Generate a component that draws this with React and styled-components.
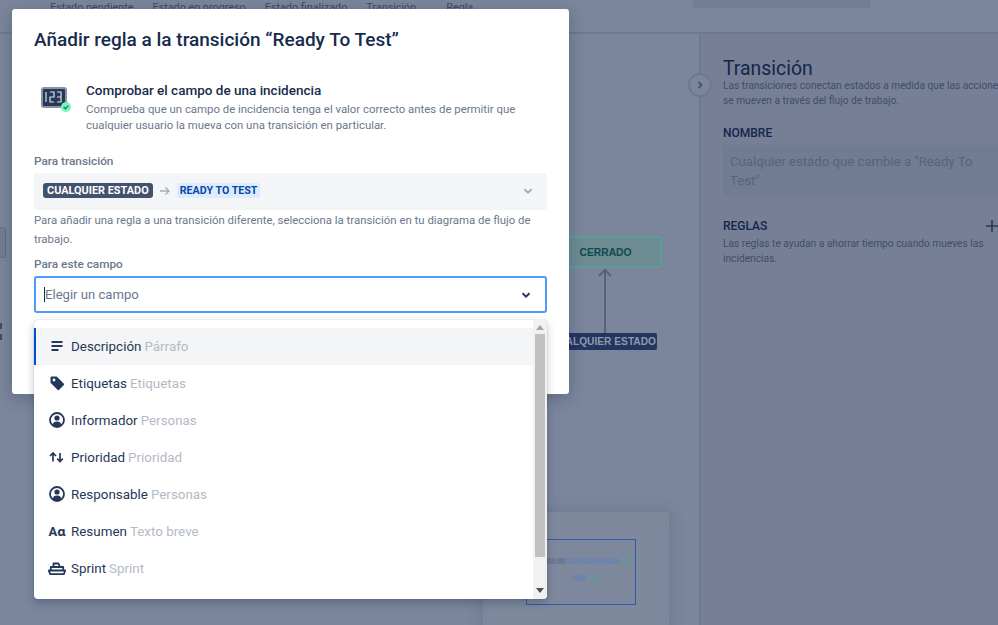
import styled, { createGlobalStyle } from 'styled-components'

const FIELDS = [
  { name: 'Descripción', type: 'Párrafo', icon: 'lines', active: true },
  { name: 'Etiquetas', type: 'Etiquetas', icon: 'tag' },
  { name: 'Informador', type: 'Personas', icon: 'person' },
  { name: 'Prioridad', type: 'Prioridad', icon: 'arrows' },
  { name: 'Responsable', type: 'Personas', icon: 'person' },
  { name: 'Resumen', type: 'Texto breve', icon: 'text' },
  { name: 'Sprint', type: 'Sprint', icon: 'boat' },
]

function FieldIcon({ icon }) {
  if (icon === 'text') return <TextGlyph>Aɑ</TextGlyph>
  return (
    <svg width="18" height="18" viewBox="0 0 18 18" fill="none">
      {icon === 'lines' && (
        <path d="M3.5 5h11M3.5 9h11M3.5 13h7" stroke="#253858" strokeWidth="2" />
      )}
      {icon === 'tag' && (
        <path
          d="M2.5 3.5a1 1 0 0 1 1-1h5.2l7 7a1.2 1.2 0 0 1 0 1.7l-4.5 4.5a1.2 1.2 0 0 1-1.7 0l-7-7zM6 7.4a1.4 1.4 0 1 0 0-2.8 1.4 1.4 0 0 0 0 2.8z"
          fill="#253858"
          fillRule="evenodd"
        />
      )}
      {icon === 'person' && (
        <>
          <circle cx="9" cy="9" r="7" stroke="#253858" strokeWidth="1.8" />
          <circle cx="9" cy="7" r="2.6" fill="#253858" />
          <path d="M4.6 14c.4-2.6 2-3.6 4.4-3.6s4 1 4.4 3.6a7 7 0 0 1-8.8 0z" fill="#253858" />
        </>
      )}
      {icon === 'arrows' && (
        <path
          d="M5 13.5V5.5M2 8l3-3 3 3M12 5v8.5M9.2 10.7l2.8 2.8 2.8-2.8"
          stroke="#253858"
          strokeWidth="1.7"
        />
      )}
      {icon === 'boat' && (
        <path
          d="M0.8 11.5h16.4l-1.4 3.7H2.2zM2.8 11.5V8h12.4v3.5M5.5 8V4.5h5L12 8"
          stroke="#253858"
          strokeWidth="1.8"
          strokeLinejoin="round"
        />
      )}
    </svg>
  )
}

function Chevron({ color }) {
  return (
    <svg width="12" height="12" viewBox="0 0 12 12" fill="none">
      <path d="M2.5 4.2L6 7.6l3.5-3.4" stroke={color} strokeWidth="2" />
    </svg>
  )
}

export default function App() {
  return (
    <>
      <GlobalStyle />
      <Page>
        <Backdrop>
          <TopBar>
            <Legend>
              <span>Estado pendiente</span>
              <span>Estado en progreso</span>
              <span>Estado finalizado</span>
              <span>Transición</span>
              <LegendLast>Regla</LegendLast>
            </Legend>
            <SearchStub />
          </TopBar>
          <Body>
            <Canvas>
              <LeftTab />
              <LeftMarks />
              <ClosedNode>CERRADO</ClosedNode>
              <FlowArrow width="14" height="66" viewBox="0 0 14 66" fill="none">
                <path d="M7 66V2M1 8l6-6 6 6" stroke="#55627f" strokeWidth="2" />
              </FlowArrow>
              <AnyNode>CUALQUIER ESTADO</AnyNode>
              <Minimap>
                <MinimapFrame>
                  <MiniRow>
                    <MiniBlock $w={10} $c="#6f7890" />
                    <MiniBlock $w={9} $c="#6f7890" />
                    <MiniBlock $w={12} $c="#7084ab" />
                    <MiniBlock $w={13} $c="#7084ab" />
                    <MiniBlock $w={13} $c="#7084ab" />
                    <MiniBlock $w={12} $c="#7084ab" />
                    <MiniBlock $w={13} $c="#6f909a" />
                  </MiniRow>
                  <MiniRowLower>
                    <MiniBlock $w={13} $c="#7084ab" />
                    <MiniBlock $w={13} $c="#6f909a" />
                  </MiniRowLower>
                </MinimapFrame>
              </Minimap>
            </Canvas>
            <SidePanel>
              <PanelTitle>Transición</PanelTitle>
              <PanelText>
                Las transiciones conectan estados a medida que las acciones se mueven a través del flujo de trabajo.
              </PanelText>
              <PanelLabel>NOMBRE</PanelLabel>
              <NameBox>Cualquier estado que cambie a "Ready To Test"</NameBox>
              <RulesHead>
                <PanelLabel>REGLAS</PanelLabel>
                <Plus width="14" height="14" viewBox="0 0 14 14" fill="none">
                  <path d="M7 1v12M1 7h12" stroke="#2b3a5c" strokeWidth="1.6" />
                </Plus>
              </RulesHead>
              <PanelText>Las reglas te ayudan a ahorrar tiempo cuando mueves las incidencias.</PanelText>
            </SidePanel>
          </Body>
          <CollapseButton>
            <svg width="10" height="10" viewBox="0 0 10 10" fill="none">
              <path d="M3.5 2l3 3-3 3" stroke="#44526f" strokeWidth="1.8" />
            </svg>
          </CollapseButton>
        </Backdrop>

        <Modal>
          <Title>Añadir regla a la transición “Ready To Test”</Title>
          <RuleInfo>
            <RuleIcon width="34" height="30" viewBox="0 0 34 30" fill="none">
              <rect x="1" y="3" width="24" height="19" rx="2" fill="#253858" stroke="#8993a4" strokeWidth="2" />
              <path
                d="M5 7v10M9 7h4v5H9v5h4M16 7h4v10h-4M16 12h4"
                stroke="#dfe1e6"
                strokeWidth="1.2"
              />
              <circle cx="25" cy="22" r="5" fill="#79f2c0" />
              <path d="M22.6 22l1.8 1.8 3-3.2" stroke="#00875a" strokeWidth="1.3" />
            </RuleIcon>
            <div>
              <RuleTitle>Comprobar el campo de una incidencia</RuleTitle>
              <RuleText>
                Comprueba que un campo de incidencia tenga el valor correcto antes de permitir que cualquier usuario la
                mueva con una transición en particular.
              </RuleText>
            </div>
          </RuleInfo>

          <FieldLabel>Para transición</FieldLabel>
          <TransitionSelect>
            <Lozenge>CUALQUIER ESTADO</Lozenge>
            <svg width="12" height="12" viewBox="0 0 12 12" fill="none">
              <path d="M1 6h9M6.5 2.5L10 6l-3.5 3.5" stroke="#a5adba" strokeWidth="1.3" />
            </svg>
            <BlueLozenge>READY TO TEST</BlueLozenge>
            <SelectChevron>
              <Chevron color="#a5adba" />
            </SelectChevron>
          </TransitionSelect>
          <Help>
            Para añadir una regla a una transición diferente, selecciona la transición en tu diagrama de flujo de
            trabajo.
          </Help>

          <FieldLabelLower>Para este campo</FieldLabelLower>
          <FieldInput>
            <Caret />
            <Placeholder>Elegir un campo</Placeholder>
            <SelectChevron>
              <Chevron color="#253858" />
            </SelectChevron>
          </FieldInput>
        </Modal>

        <Dropdown>
          <OptionList>
            {FIELDS.map(field => (
              <Option key={field.name} $active={field.active}>
                <IconSlot>
                  <FieldIcon icon={field.icon} />
                </IconSlot>
                <OptionName>{field.name}</OptionName>
                <OptionType>{field.type}</OptionType>
              </Option>
            ))}
          </OptionList>
          <ScrollTrack>
            <ScrollArrow $up />
            <ScrollThumb />
            <ScrollArrow />
          </ScrollTrack>
        </Dropdown>
      </Page>
    </>
  )
}

const GlobalStyle = createGlobalStyle`
  html, body {
    margin: 0;
    height: 100%;
    overflow: hidden;
  }
  * {
    box-sizing: border-box;
  }
  body {
    font-family: Roboto, "Noto Sans", sans-serif;
    color: #172b4d;
  }
`
const Page = styled.div`
  position: relative;
  width: 998px;
  height: 625px;
  overflow: hidden;
  background: #7b859b;
`
const Backdrop = styled.div`
  position: relative;
  display: flex;
  flex-direction: column;
  height: 100%;
  color: #14264a;
`
const TopBar = styled.div`
  display: flex;
  justify-content: space-between;
  height: 34px;
  flex: none;
  padding-left: 50px;
  border-bottom: 2px solid #6e788f;
`
const Legend = styled.div`
  display: flex;
  gap: 19px;
  font-size: 10.8px;
  line-height: 14px;
  margin-top: 1px;
  color: #3c4966;
`
const LegendLast = styled.span`
  margin-left: 11px;
`
const SearchStub = styled.div`
  width: 177px;
  height: 8px;
  margin-right: 128px;
  background: #727d98;
`
const Body = styled.div`
  display: flex;
  flex: 1;
  min-height: 0;
`
const Canvas = styled.div`
  position: relative;
  flex: 1;
`
const LeftTab = styled.div`
  position: absolute;
  left: -10px;
  top: 193px;
  width: 16px;
  height: 31px;
  background: #727c92;
  border: 1px solid #636e88;
  border-radius: 3px;
`
const LeftMarks = styled.div`
  position: absolute;
  left: 0;
  top: 289px;
  width: 2px;
  height: 17px;
  border-top: 6px solid #3d4a68;
  border-bottom: 6px solid #3d4a68;
`
const ClosedNode = styled.div`
  position: absolute;
  left: 549px;
  top: 202px;
  width: 113px;
  height: 32px;
  display: flex;
  align-items: center;
  justify-content: center;
  background: #6d8b93;
  border: 2px solid #5e9d98;
  border-radius: 4px;
  font: bold 10.3px "Liberation Sans", sans-serif;
  color: #0f4a50;
`
const FlowArrow = styled.svg`
  position: absolute;
  left: 598px;
  top: 234px;
`
const AnyNode = styled.div`
  position: absolute;
  left: 540px;
  top: 299px;
  width: 117px;
  height: 17px;
  display: flex;
  align-items: center;
  justify-content: flex-end;
  padding-right: 1px;
  white-space: nowrap;
  background: #233660;
  border-radius: 2px;
  font: bold 10.2px "Liberation Sans", sans-serif;
  color: #8f99ad;
`
const Minimap = styled.div`
  position: absolute;
  left: 483px;
  top: 478px;
  width: 186px;
  height: 120px;
  background: #7e889d;
  box-shadow: 0 0 12px rgba(80, 90, 115, 0.35);
`
const MinimapFrame = styled.div`
  margin: 27px 0 0 43px;
  width: 110px;
  height: 66px;
  border: 1px solid #2f5aa8;
  display: flex;
  flex-direction: column;
  padding: 18px 2px 0 0;
`
const MiniRow = styled.div`
  display: flex;
  justify-content: flex-end;
  gap: 1px;
`
const MiniRowLower = styled(MiniRow)`
  justify-content: center;
  margin-top: 11px;
  padding-left: 12px;
`
const MiniBlock = styled.div`
  width: ${p => p.$w}px;
  height: 6px;
  background: ${p => p.$c};
`
const SidePanel = styled.aside`
  width: 299px;
  flex: none;
  padding: 25px 0 0 22px;
  background: #767f95;
  border-left: 2px solid #6e788f;
  overflow: hidden;
`
const CollapseButton = styled.div`
  position: absolute;
  left: 688px;
  top: 73px;
  display: flex;
  align-items: center;
  justify-content: center;
  width: 24px;
  height: 24px;
  background: #7b859b;
  border: 2px solid #6e788f;
  border-radius: 50%;
`
const PanelTitle = styled.div`
  font-size: 19.4px;
  line-height: 20px;
  margin-bottom: -1px;
  color: #14264a;
`
const PanelText = styled.p`
  margin: 0;
  width: 285px;
  font-size: 10.2px;
  line-height: 15px;
  color: #3f4d6c;
`
const PanelLabel = styled.div`
  margin-top: 17px;
  font-size: 12px;
  font-weight: 500;
  line-height: 16px;
  color: #14264a;
`
const NameBox = styled.div`
  width: 275px;
  height: 52px;
  margin-top: 4px;
  padding: 7px;
  font-size: 13.2px;
  line-height: 19px;
  color: #57627d;
  background: #717c93;
`
const RulesHead = styled.div`
  display: flex;
  justify-content: space-between;
  width: 275px;
  margin-top: 4px;
  margin-bottom: 2px;
`
const Plus = styled.svg`
  margin-top: 18px;
  margin-right: -1px;
`
const Modal = styled.section`
  position: absolute;
  left: 12px;
  top: 9px;
  width: 557px;
  height: 385px;
  padding: 19px 22px;
  background: #fff;
  border-radius: 3px;
  box-shadow: 0 4px 16px rgba(9, 30, 66, 0.25);
`
const Title = styled.h1`
  margin: 0;
  font-size: 19px;
  font-weight: 500;
  line-height: 24px;
  color: #172b4d;
`
const RuleInfo = styled.div`
  display: flex;
  gap: 11px;
  margin-top: 29px;
  padding-left: 7px;
`
const RuleIcon = styled.svg`
  flex: none;
  margin-top: 4px;
`
const RuleTitle = styled.div`
  font-size: 13.5px;
  font-weight: 500;
  line-height: 18px;
  color: #172b4d;
`
const RuleText = styled.p`
  margin: 2px 0 0;
  width: 445px;
  font-size: 11.4px;
  line-height: 16px;
  color: #6b778c;
`
const FieldLabel = styled.div`
  margin-top: 20px;
  font-size: 11.8px;
  font-weight: 500;
  line-height: 16px;
  color: #6b778c;
`
const FieldLabelLower = styled(FieldLabel)`
  margin-top: 7px;
`
const TransitionSelect = styled.div`
  position: relative;
  display: flex;
  align-items: center;
  gap: 6px;
  height: 37px;
  margin-top: 4px;
  padding: 0 0 2px 9px;
  background: #f4f5f7;
  border-radius: 3px;
`
const Lozenge = styled.span`
  padding: 0 4px;
  height: 15px;
  font-size: 10.9px;
  font-weight: 700;
  line-height: 15px;
  color: #fff;
  background: #42526e;
  border-radius: 3px;
`
const BlueLozenge = styled(Lozenge)`
  padding: 0 3px;
  font-size: 10.7px;
  color: #0747a6;
  background: #deebff;
`
const SelectChevron = styled.span`
  display: flex;
  margin-left: auto;
  margin-right: 13px;
`
const Help = styled.p`
  margin: 1px 0 0;
  width: 505px;
  font-size: 11.4px;
  line-height: 19px;
  color: #6b778c;
`
const FieldInput = styled.div`
  display: flex;
  align-items: center;
  height: 37px;
  margin-top: 4px;
  padding-left: 8px;
  border: 2px solid #4c9aff;
  border-radius: 3px;
  background: #fff;
`
const Caret = styled.span`
  width: 1px;
  height: 15px;
  background: #172b4d;
`
const Placeholder = styled.span`
  font-size: 13.1px;
  color: #6b778c;
`
const Dropdown = styled.div`
  position: absolute;
  left: 34px;
  top: 320px;
  width: 513px;
  height: 279px;
  display: flex;
  background: #fff;
  border-radius: 4px;
  overflow: hidden;
  box-shadow: 0 0 1px rgba(9, 30, 66, 0.4), 0 4px 8px rgba(9, 30, 66, 0.25);
`
const OptionList = styled.div`
  flex: 1;
  padding-top: 8px;
`
const Option = styled.div`
  display: flex;
  align-items: center;
  height: 37px;
  padding: 0 0 1px 14px;
  font-size: 13.4px;
  background: ${p => (p.$active ? '#f4f5f7' : 'transparent')};
  box-shadow: ${p => (p.$active ? 'inset 2px 0 0 #0052cc' : 'none')};
`
const IconSlot = styled.span`
  display: flex;
  align-items: center;
  justify-content: center;
  width: 18px;
  margin-right: 5px;
`
const TextGlyph = styled.span`
  font-size: 13px;
  font-weight: 700;
  color: #253858;
  white-space: nowrap;
`
const OptionName = styled.span`
  color: #253858;
`
const OptionType = styled.span`
  margin-left: 3px;
  color: #b3bac5;
`
const ScrollTrack = styled.div`
  width: 14px;
  flex: none;
  display: flex;
  flex-direction: column;
  align-items: center;
  background: #f1f1f1;
`
const ScrollThumb = styled.div`
  width: 10px;
  height: 223px;
  margin: 1px 0 auto;
  background: #c1c1c1;
`
const ScrollArrow = styled.span`
  flex: none;
  width: 0;
  height: 0;
  margin: ${p => (p.$up ? '5px 0 3px' : '0 0 6px')};
  border-left: 4px solid transparent;
  border-right: 4px solid transparent;
  border-bottom: ${p => (p.$up ? '5px solid #a3a3a3' : 'none')};
  border-top: ${p => (p.$up ? 'none' : '5px solid #505050')};
`
